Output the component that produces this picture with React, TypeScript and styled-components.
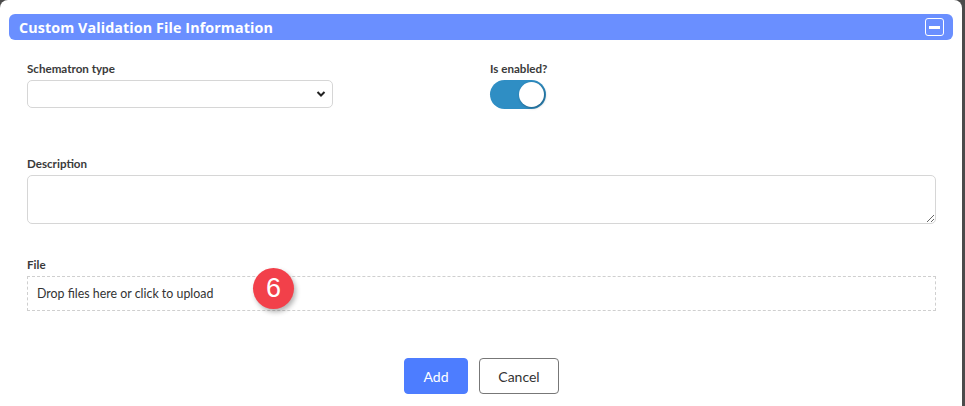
import React, { useState } from "react";
import styled, { createGlobalStyle } from "styled-components";

const GlobalStyle = createGlobalStyle`
  html, body {
    margin: 0;
    padding: 0;
    background: #4b4b4b;
    overflow: hidden;
  }
  body {
    font-family: Lato, "Liberation Sans", sans-serif;
    color: #333;
  }
`;

const Modal = styled.div`
  width: 962px;
  height: 420px;
  background: #fff;
  border-radius: 8px 8px 0 0;
  display: flex;
  flex-direction: column;
`;

const Header = styled.div`
  margin: 14px 9px 0 9px;
  height: 26px;
  background: #6a8fff;
  border-radius: 6px;
  display: flex;
  align-items: center;
  justify-content: space-between;
  padding: 0 9px 0 10px;
`;

const Title = styled.h2`
  margin: 0;
  font-family: "Open Sans", "Liberation Sans", sans-serif;
  font-weight: 700;
  font-size: 14.3px;
  letter-spacing: 0.1px;
  color: #fff;
`;

const CollapseButton = styled.button`
  width: 19px;
  height: 18px;
  padding: 0;
  border: 1.5px solid #fff;
  border-radius: 3px;
  background: transparent;
  display: flex;
  align-items: center;
  justify-content: center;
  cursor: pointer;

  &::before {
    content: "";
    width: 11px;
    height: 3px;
    background: #fff;
  }
`;

const Form = styled.form`
  padding: 22px 26px 0 27px;
  display: flex;
  flex-direction: column;
`;

const TopRow = styled.div`
  display: grid;
  grid-template-columns: 463px 1fr;
`;

const Field = styled.div<{ $gap?: number }>`
  display: flex;
  flex-direction: column;
  margin-top: ${(p) => p.$gap ?? 0}px;
`;

const Label = styled.label`
  font-size: 11.6px;
  font-weight: 700;
  line-height: 14px;
  color: #3a3a3a;
  margin-bottom: 4px;
`;

const SelectBox = styled.div`
  position: relative;
  width: 306px;
  height: 28px;
  border: 1px solid #d6d6d6;
  border-radius: 5px;
  box-sizing: border-box;
`;

const Chevron = styled.svg`
  position: absolute;
  right: 6px;
  top: 9px;
`;

const Toggle = styled.div<{ $on: boolean }>`
  position: relative;
  width: 56px;
  height: 29px;
  border-radius: 15px;
  background: ${(p) => (p.$on ? "#2f8ec4" : "#ccc")};
  cursor: pointer;
`;

const Knob = styled.span<{ $on: boolean }>`
  position: absolute;
  top: 2px;
  left: ${(p) => (p.$on ? 29 : 2)}px;
  width: 25px;
  height: 25px;
  border-radius: 50%;
  background: #fff;
  box-shadow: 1px 1px 3px rgba(0, 0, 0, 0.35);
`;

const TextArea = styled.textarea`
  height: 49px;
  border: 1px solid #d6d6d6;
  border-radius: 5px;
  box-sizing: border-box;
  resize: vertical;
  font-family: inherit;
`;

const DropZone = styled.div`
  position: relative;
  height: 35px;
  border: 1px dashed #cfcfcf;
  box-sizing: border-box;
  display: flex;
  align-items: center;
  padding-left: 9px;
  font-size: 12.4px;
  color: #333;
  cursor: pointer;
`;

const StepBadge = styled.span`
  position: absolute;
  left: 225px;
  top: -9px;
  width: 41px;
  height: 41px;
  border-radius: 50%;
  background: #f2404a;
  color: #fff;
  font-family: "Liberation Sans", Arial, sans-serif;
  font-size: 27px;
  display: flex;
  align-items: center;
  justify-content: center;
  box-shadow: 2px 3px 5px rgba(0, 0, 0, 0.3);
`;

const Actions = styled.div`
  display: flex;
  justify-content: center;
  gap: 11px;
  margin-top: 47px;
`;

const Button = styled.button<{ $primary?: boolean }>`
  height: 36px;
  width: ${(p) => (p.$primary ? 64 : 80)}px;
  padding: 0;
  border-radius: 4px;
  font-family: Lato, "Liberation Sans", sans-serif;
  font-size: 14px;
  cursor: pointer;
  background: ${(p) => (p.$primary ? "#4d7dff" : "#fff")};
  color: ${(p) => (p.$primary ? "#fff" : "#333")};
  border: 1px solid ${(p) => (p.$primary ? "#4d7dff" : "#777")};
`;

export default function App() {
  const [enabled, setEnabled] = useState(true);

  return (
    <>
      <GlobalStyle />
      <Modal>
        <Header>
          <Title>Custom Validation File Information</Title>
          <CollapseButton aria-label="Collapse" />
        </Header>
        <Form onSubmit={(e) => e.preventDefault()}>
          <TopRow>
            <Field>
              <Label>Schematron type</Label>
              <SelectBox>
                <Chevron width="10" height="8" viewBox="0 0 10 8">
                  <path d="M1.5 2 L5 5.5 L8.5 2" fill="none" stroke="#222" strokeWidth="2" />
                </Chevron>
              </SelectBox>
            </Field>
            <Field>
              <Label>Is enabled?</Label>
              <Toggle $on={enabled} onClick={() => setEnabled(!enabled)}>
                <Knob $on={enabled} />
              </Toggle>
            </Field>
          </TopRow>
          <Field $gap={48}>
            <Label>Description</Label>
            <TextArea />
          </Field>
          <Field $gap={34}>
            <Label>File</Label>
            <DropZone>
              Drop files here or click to upload
              <StepBadge>6</StepBadge>
            </DropZone>
          </Field>
          <Actions>
            <Button $primary>Add</Button>
            <Button type="button">Cancel</Button>
          </Actions>
        </Form>
      </Modal>
    </>
  );
}
